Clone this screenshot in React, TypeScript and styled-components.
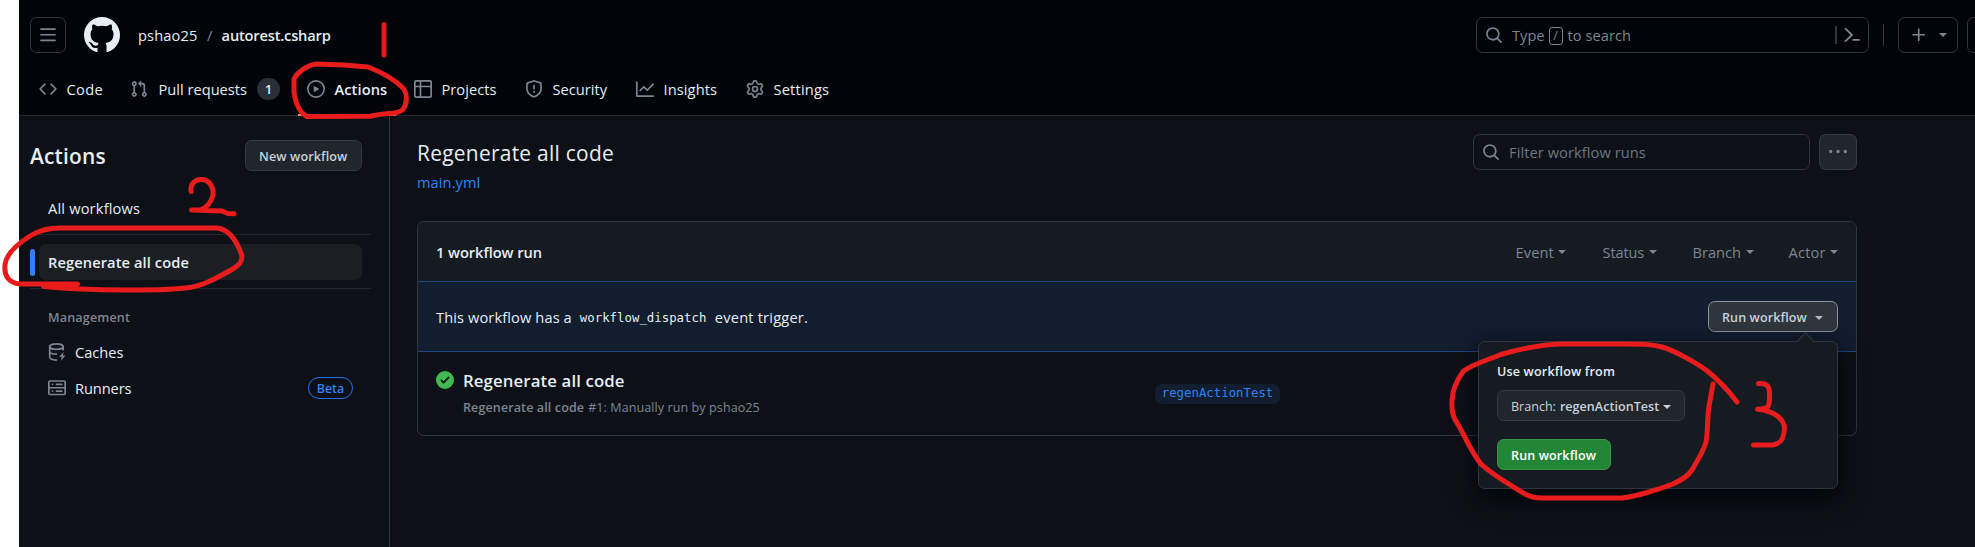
import React from "react";
import styled, { createGlobalStyle } from "styled-components";

const GlobalStyle = createGlobalStyle`
  * { box-sizing: border-box; }
  html, body { margin: 0; padding: 0; background: #ffffff; }
  body {
    height: 547px;
    overflow: hidden;
    font-family: "Open Sans", "Noto Sans", sans-serif;
    font-size: 14.65px;
    line-height: 22px;
    color: #e6edf3;
  }
`;

const SANS = `"Open Sans", "Noto Sans", sans-serif`;

/* ---------- shared pieces ---------- */

const ICONS = {
  bars: "M1 2.75A.75.75 0 0 1 1.75 2h12.5a.75.75 0 0 1 0 1.5H1.75A.75.75 0 0 1 1 2.75Zm0 5A.75.75 0 0 1 1.75 7h12.5a.75.75 0 0 1 0 1.5H1.75A.75.75 0 0 1 1 7.75ZM1.75 12h12.5a.75.75 0 0 1 0 1.5H1.75a.75.75 0 0 1 0-1.5Z",
  github:
    "M8 0c4.42 0 8 3.58 8 8a8.013 8.013 0 0 1-5.45 7.59c-.4.08-.55-.17-.55-.38 0-.27.01-1.13.01-2.2 0-.75-.25-1.23-.54-1.48 1.78-.2 3.65-.88 3.65-3.95 0-.88-.31-1.59-.82-2.15.08-.2.36-1.02-.08-2.12 0 0-.67-.22-2.2.82-.64-.18-1.32-.27-2-.27-.68 0-1.36.09-2 .27-1.53-1.03-2.2-.82-2.2-.82-.44 1.1-.16 1.92-.08 2.12-.51.56-.82 1.28-.82 2.15 0 3.06 1.86 3.75 3.64 3.95-.23.2-.44.55-.51 1.07-.46.21-1.61.55-2.33-.66-.15-.24-.6-.83-1.23-.82-.67.01-.27.38.01.53.34.19.73.9.82 1.13.16.45.68 1.31 2.69.94 0 .67.01 1.3.01 1.49 0 .21-.15.45-.55.38A7.995 7.995 0 0 1 0 8c0-4.42 3.58-8 8-8Z",
  code: "m11.28 3.22 4.25 4.25a.75.75 0 0 1 0 1.06l-4.25 4.25a.749.749 0 0 1-1.275-.326.749.749 0 0 1 .215-.734L13.94 8l-3.72-3.72a.749.749 0 0 1 .326-1.275.749.749 0 0 1 .734.215Zm-6.56 0a.751.751 0 0 1 1.042.018.751.751 0 0 1 .018 1.042L2.06 8l3.72 3.72a.749.749 0 0 1-.326 1.275.749.749 0 0 1-.734-.215L.47 8.53a.75.75 0 0 1 0-1.06Z",
  pull: "M1.5 3.25a2.25 2.25 0 1 1 3 2.122v5.256a2.251 2.251 0 1 1-1.5 0V5.372A2.25 2.25 0 0 1 1.5 3.25Zm5.677-.177L9.573.677A.25.25 0 0 1 10 .854V2.5h1A2.5 2.5 0 0 1 13.5 5v5.628a2.251 2.251 0 1 1-1.5 0V5a1 1 0 0 0-1-1h-1v1.646a.25.25 0 0 1-.427.177L7.177 3.427a.25.25 0 0 1 0-.354ZM3.75 2.5a.75.75 0 1 0 0 1.5.75.75 0 0 0 0-1.5Zm0 9.5a.75.75 0 1 0 0 1.5.75.75 0 0 0 0-1.5Zm8.25.75a.75.75 0 1 0 1.5 0 .75.75 0 0 0-1.5 0Z",
  play: "M8 0a8 8 0 1 1 0 16A8 8 0 0 1 8 0ZM1.5 8a6.5 6.5 0 1 0 13 0 6.5 6.5 0 0 0-13 0Zm4.879-2.773 4.264 2.559a.25.25 0 0 1 0 .428l-4.264 2.559A.25.25 0 0 1 6 10.559V5.442a.25.25 0 0 1 .379-.215Z",
  table:
    "M0 1.75C0 .784.784 0 1.75 0h12.5C15.216 0 16 .784 16 1.75v12.5A1.75 1.75 0 0 1 14.25 16H1.75A1.75 1.75 0 0 1 0 14.25ZM6.5 6.5v8h7.75a.25.25 0 0 0 .25-.25V6.5Zm8-1.5V1.75a.25.25 0 0 0-.25-.25H6.5V5Zm-13 1.5v7.75c0 .138.112.25.25.25H5v-8ZM5 5V1.5H1.75a.25.25 0 0 0-.25.25V5Z",
  shield:
    "M7.467.133a1.748 1.748 0 0 1 1.066 0l5.25 1.68A1.75 1.75 0 0 1 15 3.48V7c0 1.566-.32 3.182-1.303 4.682-.983 1.498-2.585 2.813-5.032 3.855a1.697 1.697 0 0 1-1.33 0c-2.447-1.042-4.049-2.357-5.032-3.855C1.32 10.182 1 8.566 1 7V3.48a1.75 1.75 0 0 1 1.217-1.667Zm.61 1.429a.25.25 0 0 0-.153 0l-5.25 1.68a.25.25 0 0 0-.174.238V7c0 1.358.275 2.666 1.057 3.86.784 1.194 2.121 2.34 4.366 3.297a.196.196 0 0 0 .154 0c2.245-.956 3.582-2.104 4.366-3.298C13.225 9.666 13.5 8.36 13.5 7V3.48a.251.251 0 0 0-.174-.237l-5.25-1.68ZM8.75 4.75v3a.75.75 0 0 1-1.5 0v-3a.75.75 0 0 1 1.5 0ZM9 10.5a1 1 0 1 1-2 0 1 1 0 0 1 2 0Z",
  graph:
    "M1.5 1.75V13.5h13.75a.75.75 0 0 1 0 1.5H.75a.75.75 0 0 1-.75-.75V1.75a.75.75 0 0 1 1.5 0Zm14.28 2.53-5.25 5.25a.75.75 0 0 1-1.06 0L7 7.06 4.28 9.78a.751.751 0 0 1-1.042-.018.751.751 0 0 1-.018-1.042l3.25-3.25a.75.75 0 0 1 1.06 0L10 7.94l4.72-4.72a.751.751 0 0 1 1.042.018.751.751 0 0 1 .018 1.042Z",
  gear: "M8 0a8.2 8.2 0 0 1 .701.031C9.444.095 9.99.645 10.16 1.29l.288 1.107c.018.066.079.158.212.224.231.114.454.243.668.386.123.082.233.09.299.071l1.103-.303c.644-.176 1.392.021 1.82.63.27.385.506.792.704 1.218.315.675.111 1.422-.364 1.891l-.814.806c-.049.048-.098.147-.088.294.016.257.016.515 0 .772-.01.147.038.246.088.294l.814.806c.475.469.679 1.216.364 1.891a7.977 7.977 0 0 1-.704 1.217c-.428.61-1.176.807-1.82.63l-1.102-.302c-.067-.019-.177-.011-.3.071a5.909 5.909 0 0 1-.668.386c-.133.066-.194.158-.211.224l-.29 1.106c-.168.646-.715 1.196-1.458 1.26a8.006 8.006 0 0 1-1.402 0c-.743-.064-1.289-.614-1.458-1.26l-.289-1.106c-.018-.066-.079-.158-.212-.224a5.738 5.738 0 0 1-.668-.386c-.123-.082-.233-.09-.299-.071l-1.103.303c-.644.176-1.392-.021-1.82-.63a8.12 8.12 0 0 1-.704-1.218c-.315-.675-.111-1.422.363-1.891l.815-.806c.05-.048.098-.147.088-.294a6.214 6.214 0 0 1 0-.772c.01-.147-.038-.246-.088-.294l-.815-.806C.635 6.045.431 5.298.746 4.623a7.92 7.92 0 0 1 .704-1.217c.428-.61 1.176-.807 1.82-.63l1.102.302c.067.019.177.011.3-.071.214-.143.437-.272.668-.386.133-.066.194-.158.211-.224l.29-1.106C6.009.645 6.556.095 7.299.03 7.53.01 7.764 0 8 0Zm-.571 1.525c-.036.003-.108.036-.137.146l-.289 1.105c-.147.561-.549.967-.998 1.189-.173.086-.34.183-.5.29-.417.278-.97.423-1.529.27l-1.103-.303c-.109-.03-.175.016-.195.045-.22.312-.412.644-.573.99-.014.031-.021.11.059.19l.815.806c.411.406.562.957.53 1.456a4.709 4.709 0 0 0 0 .582c.032.499-.119 1.05-.53 1.456l-.815.806c-.081.08-.073.159-.059.19.162.346.353.677.573.989.02.03.085.076.195.046l1.102-.303c.56-.153 1.113-.008 1.53.27.161.107.328.204.501.29.447.222.85.629.997 1.189l.289 1.105c.029.109.101.143.137.146a6.6 6.6 0 0 0 1.142 0c.036-.003.108-.036.137-.146l.289-1.105c.147-.561.549-.967.998-1.189.173-.086.34-.183.5-.29.417-.278.97-.423 1.529-.27l1.103.303c.109.029.175-.016.195-.045.22-.313.411-.644.573-.99.014-.031.021-.11-.059-.19l-.815-.806c-.411-.406-.562-.957-.53-1.456a4.709 4.709 0 0 0 0-.582c-.032-.499.119-1.05.53-1.456l.815-.806c.081-.08.073-.159.059-.19a6.464 6.464 0 0 0-.573-.989c-.02-.03-.085-.076-.195-.046l-1.102.303c-.56.153-1.113.008-1.53-.27a4.44 4.44 0 0 0-.501-.29c-.447-.222-.85-.629-.997-1.189l-.289-1.105c-.029-.11-.101-.143-.137-.146a6.6 6.6 0 0 0-1.142 0ZM11 8a3 3 0 1 1-6 0 3 3 0 0 1 6 0ZM9.5 8a1.5 1.5 0 1 0-3.001.001A1.5 1.5 0 0 0 9.5 8Z",
  search:
    "M10.68 11.74a6 6 0 0 1-7.922-8.982 6 6 0 0 1 8.982 7.922l3.04 3.04a.749.749 0 0 1-.326 1.275.749.749 0 0 1-.734-.215ZM11.5 7a4.499 4.499 0 1 0-8.997 0A4.499 4.499 0 0 0 11.5 7Z",
  plus: "M7.75 2a.75.75 0 0 1 .75.75V7h4.25a.75.75 0 0 1 0 1.5H8.5v4.25a.75.75 0 0 1-1.5 0V8.5H2.75a.75.75 0 0 1 0-1.5H7V2.75A.75.75 0 0 1 7.75 2Z",
  kebab:
    "M8 9a1.5 1.5 0 1 0 0-3 1.5 1.5 0 0 0 0 3ZM1.5 9a1.5 1.5 0 1 0 0-3 1.5 1.5 0 0 0 0 3Zm13 0a1.5 1.5 0 1 0 0-3 1.5 1.5 0 0 0 0 3Z",
  checkCircle:
    "M8 16A8 8 0 1 1 8 0a8 8 0 0 1 0 16Zm3.78-9.72a.751.751 0 0 0-.018-1.042.751.751 0 0 0-1.042-.018L6.75 9.19 5.28 7.72a.751.751 0 0 0-1.042.018.751.751 0 0 0-.018 1.042l2 2a.75.75 0 0 0 1.06 0Z",
};

const Svg = styled.svg`
  display: block;
  flex: none;
`;

function Icon({ name, size = 18, color = "#7d8590" }: { name: keyof typeof ICONS; size?: number; color?: string }) {
  return (
    <Svg width={size} height={size} viewBox="0 0 16 16" fill={color} aria-hidden="true">
      <path d={ICONS[name]} />
    </Svg>
  );
}

function CacheIcon() {
  return (
    <Svg width="18" height="18" viewBox="0 0 16 16" fill="none" stroke="#7d8590" strokeWidth="1.5" strokeLinecap="round">
      <ellipse cx="7.5" cy="3.25" rx="6" ry="2.4" />
      <path d="M1.5 3.25v9.25c0 1.4 2.4 2.6 5.9 2.7M1.5 7.5c0 1.3 2.4 2.3 6 2.4M13.5 3.25V6" />
      <path d="M13.9 7.9 9.9 12.3h2.3l-.6 3.5 3.9-4.6h-2.2Z" fill="#7d8590" stroke="none" />
    </Svg>
  );
}

function ServerIcon() {
  return (
    <Svg width="18" height="18" viewBox="0 0 16 16" fill="none" stroke="#7d8590" strokeWidth="1.5" strokeLinecap="round">
      <rect x=".75" y="1.75" width="14.5" height="12" rx="1" />
      <path d="M.75 7.75h14.5M7.5 4.75h4.75M7.5 10.75h4.75M4 4.75h.01M4 10.75h.01" />
    </Svg>
  );
}

function PromptIcon() {
  return (
    <Svg width="18" height="18" viewBox="0 0 18 18" fill="none" stroke="#7d8590" strokeWidth="1.8" strokeLinecap="round" strokeLinejoin="round">
      <path d="M2.5 2.6 8.9 9l-6.4 6.2M10.2 13.9h5.8" />
    </Svg>
  );
}

const Caret = styled.span<{ $color?: string }>`
  width: 0;
  height: 0;
  flex: none;
  border: 4px solid transparent;
  border-top-color: ${(p) => p.$color ?? "#7d8590"};
  border-bottom: 0;
`;

const CaretGap = styled.span<{ $tight?: boolean }>`
  width: ${(p) => (p.$tight ? 4 : 8)}px;
`;

const Text = styled.span<{ $ls?: number }>`
  letter-spacing: ${(p) => p.$ls ?? 0}px;
  white-space: nowrap;
`;

const Button = styled.button<{ $width: number; $tone?: "default" | "active" | "primary" }>`
  display: flex;
  align-items: center;
  width: ${(p) => p.$width}px;
  height: 31px;
  padding: 2px 0 0 13px;
  border: 1px solid ${(p) => (p.$tone === "active" ? "#8b949e" : p.$tone === "primary" ? "#39924a" : "#363b42")};
  border-radius: 6.75px;
  background: ${(p) => (p.$tone === "active" ? "#30363d" : p.$tone === "primary" ? "#238636" : "#21262d")};
  color: ${(p) => (p.$tone === "primary" ? "#ffffff" : "#c9d1d9")};
  font: 600 12.55px/20px ${SANS};
`;

/* ---------- page frame ---------- */

const Page = styled.div`
  position: relative;
  width: 1975px;
  height: 547px;
  padding-left: 19px;
  overflow: hidden;
`;

const Shell = styled.div`
  display: flex;
  flex-direction: column;
  height: 547px;
  background: #0d1117;
`;

const Header = styled.header`
  flex: none;
  height: 116px;
  padding: 17px 0 0 11px;
  background: #010409;
  border-bottom: 1px solid #24282e;
`;

const TopRow = styled.div`
  display: flex;
  align-items: center;
  height: 36px;
`;

const OutlineButton = styled.button<{ $width: number }>`
  display: flex;
  flex: none;
  align-items: center;
  justify-content: center;
  gap: 11px;
  width: ${(p) => p.$width}px;
  height: 36px;
  padding: 0;
  border: 1px solid #30363d;
  border-radius: 6.75px;
  background: transparent;
`;

const Logo = styled.a`
  display: flex;
  margin: 0 18px;
`;

const Crumbs = styled.nav`
  display: flex;
  align-items: center;
  flex: 1;
`;

const Slash = styled.span`
  width: 24px;
  text-align: center;
  color: #7d8590;
`;

const Strong = styled(Text)`
  font-weight: 600;
`;

const GlobalSearch = styled.div`
  display: flex;
  align-items: center;
  flex: none;
  width: 393px;
  height: 36px;
  padding: 0 7px 0 8px;
  border: 1px solid #30363d;
  border-radius: 6.75px;
  color: #7d8590;
`;

const SearchHint = styled.span`
  display: flex;
  align-items: center;
  flex: 1;
  padding-left: 9px;
`;

const Key = styled.kbd`
  width: 14px;
  height: 18px;
  margin: 1px 5px 0 4px;
  border: 1px solid #7d8590;
  border-radius: 3px;
  font: 12.5px/16px ${SANS};
  text-align: center;
`;

const SearchDivider = styled.span`
  width: 2px;
  height: 18px;
  margin-right: 6px;
  background: #30363d;
`;

const HeaderDivider = styled.span`
  width: 1px;
  height: 22px;
  margin: 0 14px;
  background: #30363d;
`;

const ClippedButton = styled(OutlineButton)`
  margin-left: 9px;
  margin-right: -28px;
`;

const Tabs = styled.nav`
  display: flex;
  height: 63px;
`;

const Tab = styled.a<{ $width: number }>`
  display: flex;
  align-items: center;
  flex: none;
  width: ${(p) => p.$width}px;
  padding: 11px 9px 2px;
`;

const TabLabel = styled(Text)<{ $active?: boolean; $gap?: number }>`
  margin: 0 0 1px ${(p) => p.$gap ?? 9.5}px;
  font-weight: ${(p) => (p.$active ? 600 : 400)};
`;

const SelectedTab = styled(Tab)`
  margin-right: 9px;
  border-bottom: 2px solid #f78166;
  padding-bottom: 0;
`;

const Counter = styled.span`
  width: 23px;
  height: 22px;
  margin-left: 10px;
  border-radius: 11px;
  background: #2b3038;
  font-size: 12.55px;
  font-weight: 600;
  line-height: 23px;
  text-align: center;
`;

/* ---------- sidebar ---------- */

const Body = styled.div`
  display: flex;
  flex: 1;
`;

const Sidebar = styled.aside`
  flex: none;
  width: 371px;
  padding: 24px 0 0 11px;
  border-right: 1px solid #30363d;
`;

const SidebarHead = styled.div`
  display: flex;
  justify-content: space-between;
  align-items: center;
  height: 31px;
  margin-right: 27px;
`;

const SidebarTitle = styled.h2`
  margin: 0;
  padding-top: 1px;
  font-size: 20.9px;
  font-weight: 600;
  letter-spacing: 0.19px;
`;

const NavRow = styled.a<{ $selected?: boolean; $top?: number }>`
  display: flex;
  align-items: center;
  height: 36px;
  margin: ${(p) => p.$top ?? 0}px 27px 0 9px;
  padding: 0 9px;
  border-radius: 6.75px;
  background: ${(p) => (p.$selected ? "#1b1f23" : "transparent")};
  font-weight: ${(p) => (p.$selected ? 600 : 400)};
`;

const Marker = styled.span`
  flex: none;
  width: 5px;
  height: 27px;
  margin: 0 13px 0 -18px;
  border-radius: 6px;
  background: #2f81f7;
`;

const NavLabel = styled(Text)`
  flex: 1;
  margin-left: 9px;
`;

const Rule = styled.hr<{ $top: number }>`
  height: 1px;
  margin: ${(p) => p.$top}px 18px 0 0;
  border: 0;
  background: #21262d;
`;

const GroupTitle = styled.h3`
  margin: 17px 0 0 18px;
  height: 28px;
  color: #7d8590;
  font-size: 12.55px;
  font-weight: 600;
  line-height: 23px;
  letter-spacing: 0.17px;
`;

const BetaTag = styled.span`
  width: 45px;
  height: 22px;
  border: 1px solid #1f6feb;
  border-radius: 11px;
  color: #2f81f7;
  font-size: 12.4px;
  font-weight: 600;
  line-height: 22px;
  text-align: center;
`;

/* ---------- main column ---------- */

const Main = styled.main`
  width: 1467px;
  padding: 18px 0 0 27px;
`;

const MainHead = styled.div`
  display: flex;
  align-items: flex-start;
  height: 87px;
`;

const TitleBlock = styled.div`
  flex: 1;
  padding-top: 3px;
`;

const Title = styled.h1`
  margin: 0;
  font-size: 20.9px;
  font-weight: 400;
  line-height: 32px;
  letter-spacing: 0.28px;
`;

const FileLink = styled.a`
  display: block;
  margin-top: 1px;
  line-height: 24px;
  letter-spacing: 0.07px;
  color: #2f81f7;
`;

const FilterBox = styled.div`
  display: flex;
  align-items: center;
  gap: 9px;
  width: 337px;
  height: 36px;
  margin-right: 9px;
  padding-left: 8px;
  border: 1px solid #30363d;
  border-radius: 6.75px;
  color: #6e7681;
`;

const MoreButton = styled.button`
  display: flex;
  align-items: center;
  justify-content: center;
  width: 38px;
  height: 36px;
  padding: 0;
  border: 1px solid #363b42;
  border-radius: 6.75px;
  background: #21262d;
`;

const RunsBox = styled.section`
  height: 215px;
  border: 1px solid #30363d;
  border-radius: 6.75px;
`;

const RunsHead = styled.div`
  display: flex;
  align-items: center;
  height: 59px;
  padding: 1px 0 0 18px;
  border-radius: 6px 6px 0 0;
  background: #161b22;
`;

const RunsCount = styled(Strong)`
  flex: 1;
`;

const FilterMenu = styled.span<{ $width: number }>`
  display: flex;
  align-items: center;
  gap: 4.5px;
  width: ${(p) => p.$width}px;
  color: #7d8590;
`;

const DispatchRow = styled.div`
  display: flex;
  align-items: center;
  justify-content: space-between;
  height: 71px;
  padding: 0 18px;
  border-top: 1px solid #1f477f;
  border-bottom: 1px solid #1f477f;
  background: #121d2f;
`;

const Sentence = styled.p`
  display: flex;
  align-items: center;
  margin: 0;
  padding-top: 1px;
`;

const Code = styled.code`
  margin: 1px 8.5px 0 8px;
  font: 12.36px/20px "DejaVu Sans Mono", monospace;
`;

const MenuAnchor = styled.div`
  position: relative;
`;

const Popover = styled.div`
  position: absolute;
  z-index: 2;
  top: 40px;
  right: 0;
  width: 360px;
  height: 148px;
  padding: 18px;
  border: 1px solid #30363d;
  border-radius: 6.75px;
  background: #161b22;
  box-shadow: 0 9px 27px #010409;

  &::before {
    content: "";
    position: absolute;
    top: -7px;
    right: 25px;
    width: 12px;
    height: 12px;
    border: 1px solid #30363d;
    border-right: 0;
    border-bottom: 0;
    background: linear-gradient(135deg, #161b22 50%, transparent 50%);
    transform: rotate(45deg);
  }
`;

const PopoverLabel = styled.div`
  height: 30px;
  font-size: 12.55px;
  font-weight: 600;
  line-height: 23px;
  letter-spacing: 0.17px;
`;

const BranchButton = styled(Button)`
  margin-bottom: 18px;
`;

const Plain = styled(Text)`
  margin-right: 4px;
  font-weight: 400;
`;

const RunRow = styled.div`
  display: flex;
  align-items: flex-start;
  height: 83px;
  padding: 19px 0 0 18px;
`;

const RunInfo = styled.div`
  width: 692px;
  margin-left: 9px;
`;

const RunTitle = styled.div`
  margin-top: -2px;
  font-size: 16.75px;
  font-weight: 600;
  line-height: 24px;
  letter-spacing: 0.13px;
`;

const RunMeta = styled.div`
  display: flex;
  gap: 4px;
  margin-top: 4px;
  color: #7d8590;
  font-size: 12.55px;
  line-height: 22px;
`;

const BranchTag = styled.a`
  width: 125px;
  height: 20px;
  margin-top: 13px;
  border-radius: 6.75px;
  background: #121d2f;
  color: #2f81f7;
  font: 12.36px/19px "DejaVu Sans Mono", monospace;
  text-align: center;
`;

/* Hand-drawn marks lying over the page */
const Marks = styled.svg`
  position: absolute;
  z-index: 5;
  top: 0;
  left: 0;
  pointer-events: none;
`;

const TABS_AFTER: { icon: keyof typeof ICONS; label: string; width: number; ls: number }[] = [
  { icon: "table", label: "Projects", width: 111, ls: 0.04 },
  { icon: "shield", label: "Security", width: 111, ls: 0 },
  { icon: "graph", label: "Insights", width: 110, ls: 0.09 },
  { icon: "gear", label: "Settings", width: 110, ls: 0.18 },
];

const FILTERS = [
  { label: "Event", width: 87, ls: 0.1 },
  { label: "Status", width: 90, ls: -0.15 },
  { label: "Branch", width: 96, ls: 0 },
  { label: "Actor", width: 67.5, ls: 0.2 },
];

export default function App() {
  return (
    <Page>
      <GlobalStyle />
      <Shell>
        <Header>
          <TopRow>
            <OutlineButton $width={36} aria-label="Menu">
              <Icon name="bars" />
            </OutlineButton>
            <Logo>
              <Icon name="github" size={36} color="#e6edf3" />
            </Logo>
            <Crumbs>
              <Text $ls={0.14}>pshao25</Text>
              <Slash>/</Slash>
              <Strong $ls={-0.19}>autorest.csharp</Strong>
            </Crumbs>
            <GlobalSearch>
              <Icon name="search" />
              <SearchHint>
                <Text>Type</Text>
                <Key>/</Key>
                <Text $ls={0.03}>to search</Text>
              </SearchHint>
              <SearchDivider />
              <PromptIcon />
            </GlobalSearch>
            <HeaderDivider />
            <OutlineButton $width={60} aria-label="Create new">
              <Icon name="plus" />
              <Caret />
            </OutlineButton>
            <ClippedButton $width={36} aria-label="Issues" />
          </TopRow>
          <Tabs>
            <Tab $width={91}>
              <Icon name="code" />
              <TabLabel $ls={0.3}>Code</TabLabel>
            </Tab>
            <Tab $width={177}>
              <Icon name="pull" />
              <TabLabel $gap={10.5}>Pull requests</TabLabel>
              <Counter>1</Counter>
            </Tab>
            <SelectedTab $width={98}>
              <Icon name="play" />
              <TabLabel $active $ls={0.08}>
                Actions
              </TabLabel>
            </SelectedTab>
            {TABS_AFTER.map((t) => (
              <Tab key={t.label} $width={t.width}>
                <Icon name={t.icon} />
                <TabLabel $ls={t.ls}>{t.label}</TabLabel>
              </Tab>
            ))}
          </Tabs>
        </Header>

        <Body>
          <Sidebar>
            <SidebarHead>
              <SidebarTitle>Actions</SidebarTitle>
              <Button $width={117}>
                <Text $ls={0.12}>New workflow</Text>
              </Button>
            </SidebarHead>
            <NavRow $top={19}>
              <Text $ls={0.17}>All workflows</Text>
            </NavRow>
            <Rule $top={8} />
            <NavRow $selected $top={9}>
              <Marker />
              <Text $ls={0.1}>Regenerate all code</Text>
            </NavRow>
            <Rule $top={8} />
            <GroupTitle>Management</GroupTitle>
            <NavRow>
              <CacheIcon />
              <NavLabel>Caches</NavLabel>
            </NavRow>
            <NavRow>
              <ServerIcon />
              <NavLabel $ls={-0.1}>Runners</NavLabel>
              <BetaTag>Beta</BetaTag>
            </NavRow>
          </Sidebar>

          <Main>
            <MainHead>
              <TitleBlock>
                <Title>Regenerate all code</Title>
                <FileLink>main.yml</FileLink>
              </TitleBlock>
              <FilterBox>
                <Icon name="search" />
                <Text $ls={0.07}>Filter workflow runs</Text>
              </FilterBox>
              <MoreButton aria-label="More">
                <Icon name="kebab" />
              </MoreButton>
            </MainHead>

            <RunsBox>
              <RunsHead>
                <RunsCount $ls={-0.05}>1 workflow run</RunsCount>
                {FILTERS.map((f) => (
                  <FilterMenu key={f.label} $width={f.width}>
                    <Text $ls={f.ls}>{f.label}</Text>
                    <Caret />
                  </FilterMenu>
                ))}
              </RunsHead>
              <DispatchRow>
                <Sentence>
                  <Text $ls={0.1}>This workflow has a</Text>
                  <Code>workflow_dispatch</Code>
                  <Text $ls={0.18}>event trigger.</Text>
                </Sentence>
                <MenuAnchor>
                  <Button $width={130} $tone="active">
                    <Text $ls={0.1}>Run workflow</Text>
                    <CaretGap />
                    <Caret $color="#b1bac4" />
                  </Button>
                  <Popover>
                    <PopoverLabel>Use workflow from</PopoverLabel>
                    <BranchButton $width={188}>
                      <Plain>Branch:</Plain>
                      <Text $ls={0.03}>regenActionTest</Text>
                      <CaretGap $tight />
                      <Caret $color="#c9d1d9" />
                    </BranchButton>
                    <Button $width={114} $tone="primary">
                      <Text $ls={0.12}>Run workflow</Text>
                    </Button>
                  </Popover>
                </MenuAnchor>
              </DispatchRow>
              <RunRow>
                <Icon name="checkCircle" color="#3fb950" />
                <RunInfo>
                  <RunTitle>Regenerate all code</RunTitle>
                  <RunMeta>
                    <Strong $ls={0.1}>Regenerate all code</Strong>
                    <Text $ls={0.08}>#1: Manually run by pshao25</Text>
                  </RunMeta>
                </RunInfo>
                <BranchTag>regenActionTest</BranchTag>
              </RunRow>
            </RunsBox>
          </Main>
        </Body>
      </Shell>

      <Marks width="1975" height="547" viewBox="0 0 1975 547" fill="none" stroke="#e81c1c" strokeWidth="5" strokeLinecap="round" strokeLinejoin="round">
        <path d="M384 24.5V55" />
        <path d="M316 64 344 65 368 67C384 73 396 81 403 88C408 94 407 104 403 109.500C397 115 388 112 370 116.300L307 116.500C297 111 295 100 294 92V79C297 73 307 65 316 64Z" />
        <path d="M191 191.500C190 183 196 179 202 179.500C210 180 214 188 213 195C211 203 206 208 200 210L191.500 210 222 211 228 213.500 234 213.800" />
        <path d="M77.500 284H20C8 283 4 275 5 265C6 253 19 243 30 236C41 229 50 228 60 228H217C228 229 236 240 241 253C244 260 240 265 231 270C215 279 202 286 190 287.500C165 291 90 291 43.500 286.500" />
        <path d="M1737 402C1728 390 1715 377 1706 370C1695 362 1673 350 1662 347C1651 344 1642 344 1624 344H1560C1537 345 1520 349 1501 354.500C1485 361 1473 364 1463.500 371C1455.500 382 1452.500 390 1452 400C1451.500 410 1453 417 1456 421C1467 439 1469 449 1481 464C1495 477 1516 488 1525 494C1530 497 1534 498 1542 498H1622C1634 497 1660 489 1673 484C1683 479 1688 476 1692 470C1699 458 1704 450 1706 442C1708 432 1707 420 1709 406L1713 384" />
        <path d="M1758.500 383.500C1767 383 1769 386 1769.500 392V400C1769 407 1768 409 1757.500 409.300C1776 411 1784 420 1784.500 428C1784 440 1780 444 1773 445H1753.500" />
      </Marks>
    </Page>
  );
}
